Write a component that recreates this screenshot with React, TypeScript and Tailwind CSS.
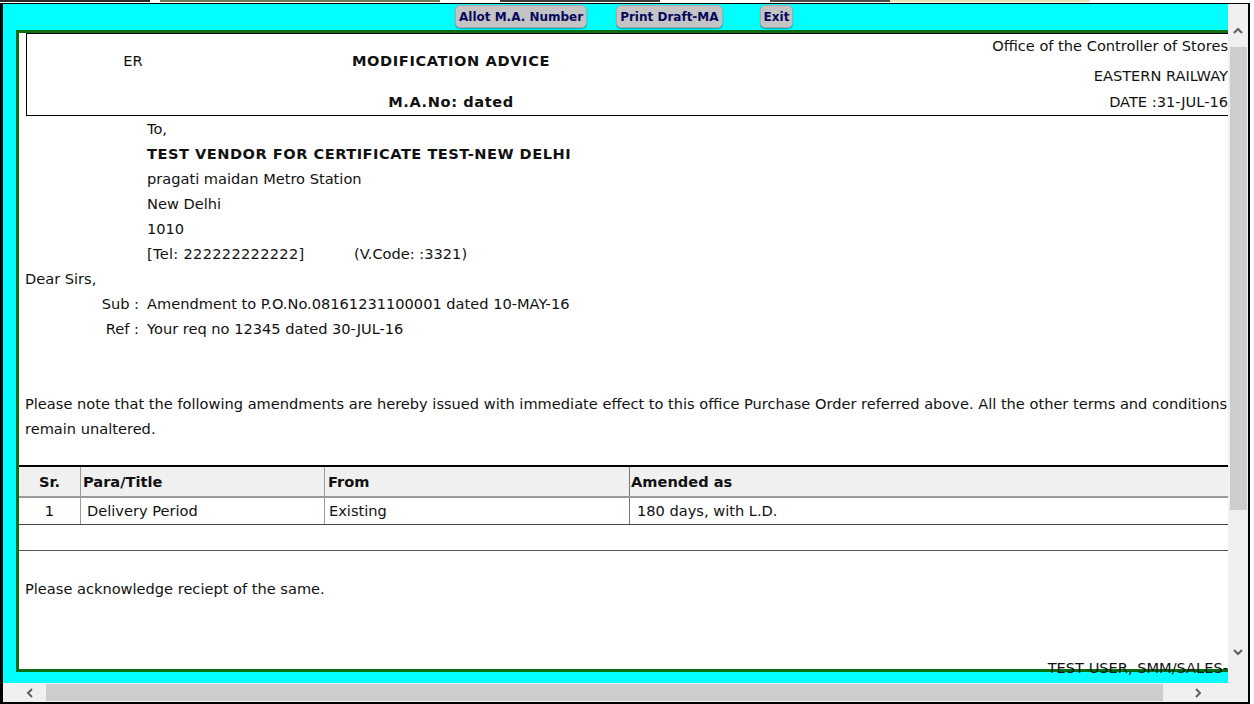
import React from "react";

const Chevron = ({ dir }: { dir: "up" | "down" | "left" | "right" }) => {
  const pts = {
    up: "1,6 5,2 9,6",
    down: "1,2 5,6 9,2",
    left: "6,1 2,5 6,9",
    right: "2,1 6,5 2,9",
  }[dir];
  const wide = dir === "up" || dir === "down";
  return (
    <svg width={wide ? 10 : 8} height={wide ? 8 : 10} viewBox={wide ? "0 0 10 8" : "0 0 8 10"}>
      <polyline points={pts} fill="none" stroke="#606060" strokeWidth="2" />
    </svg>
  );
};

const Btn = ({ label, className = "" }: { label: string; className?: string }) => (
  <button
    className={`h-[23px] px-[3px] rounded-[5px] bg-[#c4c4c4] border border-[#a8a8a8] shadow-[0_1px_1px_rgba(0,0,0,0.35)] text-[12px] font-bold text-[#08085e] leading-none ${className}`}
  >
    {label}
  </button>
);

const Line = ({ children, className = "" }: { children: React.ReactNode; className?: string }) => (
  <div className={`h-[25px] leading-[25px] whitespace-nowrap ${className}`}>{children}</div>
);

export default function App() {
  return (
    <div className="w-[1254px] h-[704px] bg-white overflow-hidden font-['DejaVu_Sans',sans-serif] text-[14.6px] text-[#111]">
      {/* page behind, peeking out at the top */}
      <div className="h-[3px] flex items-start">
        <div className="w-[150px] h-[2px] bg-[#2a2a2a]" />
        <div className="w-[10px]" />
        <div className="w-[280px] h-[2px] bg-[#6b7d55]" />
        <div className="w-[60px]" />
        <div className="w-[160px] h-[2px] bg-[#3a3a3a]" />
        <div className="w-[110px]" />
        <div className="w-[120px] h-[2px] bg-[#4a4a4a]" />
        <div className="w-[200px] h-[2px] bg-[#e8e4b8]" />
      </div>

      <div className="w-[1250px] h-[701px] border-t border-l-[3px] border-r-2 border-b-2 border-black flex flex-col">
        <div className="flex flex-1 min-h-0">
          {/* cyan viewport */}
          <div className="flex-1 min-w-0 bg-[#00ffff] overflow-hidden">
            <div className="flex pt-[1px] pl-[452px] h-[26px]">
              <Btn label="Allot M.A. Number" />
              <Btn label="Print Draft-MA" className="ml-[29px]" />
              <Btn label="Exit" className="ml-[37px]" />
            </div>

            <div className="ml-[13px] w-[1240px] h-[642px] border-[3px] border-[#0a6e12] bg-white">
              {/* letter head */}
              <div className="ml-[7px] w-[1203px] border border-black flex">
                <div className="w-[212px] flex flex-col">
                  <div className="h-[54px] flex items-center justify-center">ER</div>
                  <div className="h-[27px]" />
                </div>
                <div className="w-[424px] flex flex-col font-bold tracking-[0.6px]">
                  <div className="h-[54px] flex items-center justify-center">MODIFICATION ADVICE</div>
                  <div className="h-[27px] flex items-center justify-center pt-[1px]">M.A.No: dated</div>
                </div>
                <div className="flex-1 flex flex-col items-end whitespace-nowrap">
                  <div className="h-[54px] flex flex-col justify-between py-[3px] items-end">
                    <div className="leading-[18px]">Office of the Controller of Stores</div>
                    <div className="leading-[18px] -mt-[1px]">EASTERN RAILWAY</div>
                  </div>
                  <div className="h-[27px] flex items-center">DATE :31-JUL-16</div>
                </div>
              </div>

              {/* address */}
              <div className="pl-[128px]">
                <Line>To,</Line>
                <Line className="font-bold tracking-[0.5px]">TEST VENDOR FOR CERTIFICATE TEST-NEW DELHI</Line>
                <Line>pragati maidan Metro Station</Line>
                <Line>New Delhi</Line>
                <Line>1010</Line>
                <Line>
                  <span className="inline-block w-[207px] tracking-[0.3px]">[Tel: 222222222222]</span>
                  <span>(V.Code: :3321)</span>
                </Line>
              </div>
              <Line className="pl-[6px]">Dear Sirs,</Line>
              <Line className="flex">
                <span className="w-[120px] text-right">Sub :</span>
                <span className="pl-[8px]">Amendment to P.O.No.08161231100001 dated 10-MAY-16</span>
              </Line>
              <Line className="flex">
                <span className="w-[120px] text-right">Ref :</span>
                <span className="pl-[8px]">Your req no 12345 dated 30-JUL-16</span>
              </Line>
              <div className="h-[50px]" />
              <div className="pl-[6px] leading-[25px] whitespace-nowrap">
                Please note that the following amendments are hereby issued with immediate effect to this office Purchase Order referred above. All the other terms and conditions
                <br />
                remain unaltered.
              </div>

              {/* amendments table */}
              <div className="mt-[24px] border-t-2 border-black">
                <div className="grid grid-cols-[61px_244px_305px_1fr] h-[29px] bg-[#f0f0f0] font-bold border-b-2 border-[#9a9a9a] box-content">
                  <div className="flex items-center justify-center">Sr.</div>
                  <div className="flex items-center pl-[2px] border-l border-[#9a9a9a]">Para/Title</div>
                  <div className="flex items-center pl-[3px] border-l border-[#9a9a9a]">From</div>
                  <div className="flex items-center pl-[1px] border-l border-[#777]">Amended as</div>
                </div>
                <div className="grid grid-cols-[61px_244px_305px_1fr] h-[26px] border-b border-[#444] box-content">
                  <div className="flex items-center justify-center">1</div>
                  <div className="flex items-center pl-[6px] border-l border-[#9a9a9a]">Delivery Period</div>
                  <div className="flex items-center pl-[4px] border-l border-[#9a9a9a]">Existing</div>
                  <div className="flex items-center pl-[7px] border-l border-[#777]">180 days, with L.D.</div>
                </div>
                <div className="h-[25px] border-b border-[#555] box-content" />
              </div>

              <Line className="mt-[25px] pl-[6px]">Please acknowledge reciept of the same.</Line>
              <Line className="mt-[54px] w-[1209px] text-right">TEST USER, SMM/SALES-</Line>
            </div>
          </div>

          {/* vertical scrollbar */}
          <div className="w-[20px] bg-[#f0f0f0] flex flex-col items-center">
            <div className="h-[43px] flex items-end pb-[12px]">
              <Chevron dir="up" />
            </div>
            <div className="w-[17px] h-[463px] bg-[#cdcdcd]" />
            <div className="flex-1" />
            <div className="h-[35px] flex items-start">
              <Chevron dir="down" />
            </div>
          </div>
        </div>

        {/* horizontal scrollbar */}
        <div className="h-[19px] bg-[#f0f0f0] flex items-center">
          <div className="w-[43px] flex justify-end pr-[12px]">
            <Chevron dir="left" />
          </div>
          <div className="w-[1117px] h-[17px] bg-[#cdcdcd]" />
          <div className="w-[70px] flex justify-center">
            <Chevron dir="right" />
          </div>
        </div>
      </div>
    </div>
  );
}
